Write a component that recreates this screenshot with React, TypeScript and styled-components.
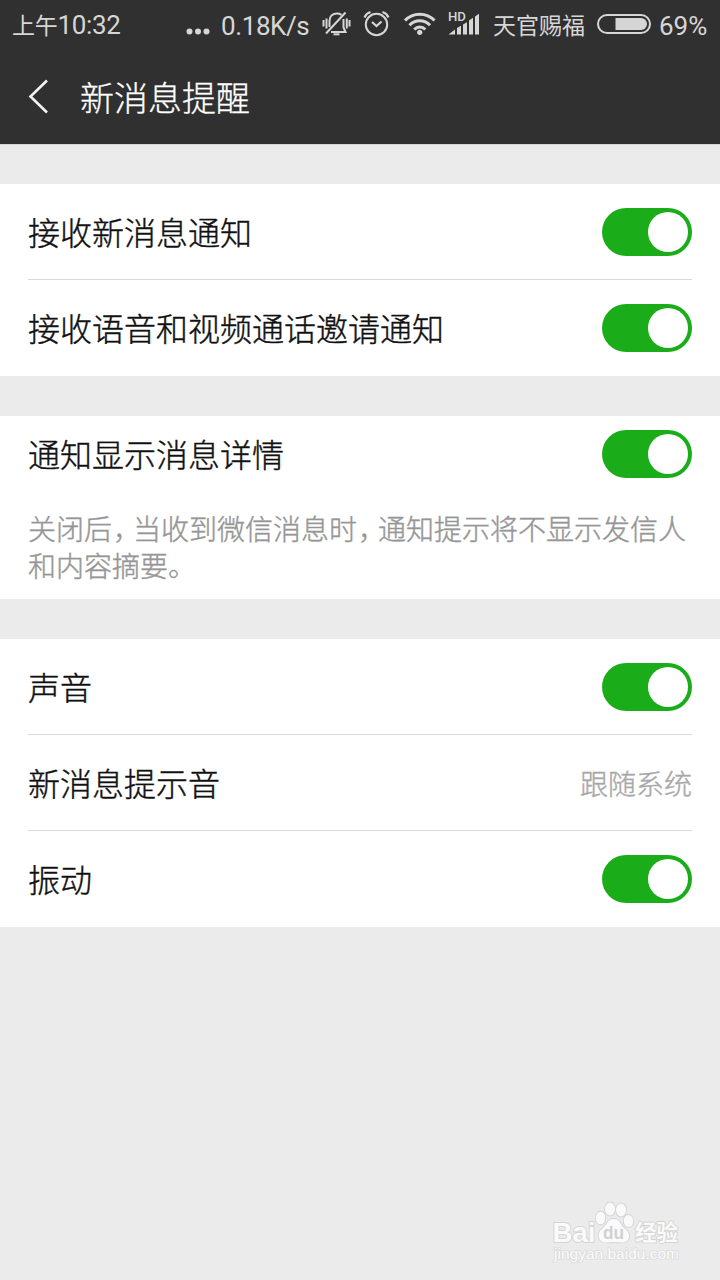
import React from 'react';
import styled, { createGlobalStyle } from 'styled-components';

const GlobalStyle = createGlobalStyle`
  * { box-sizing: border-box; }
  body { margin: 0; background: #ebebeb; }
`;

const Screen = styled.div`
  position: relative;
  width: 720px;
  height: 1280px;
  overflow: hidden;
  background: #ebebeb;
  font-family: 'Noto Sans CJK SC', sans-serif;
  font-weight: 300;
`;

const Header = styled.header`
  height: 144px;
  background: #303030;
  box-shadow: 0 1px 0 #d4d4d4;
`;

const StatusBar = styled.div`
  display: flex;
  align-items: center;
  height: 50px;
  padding: 0 12px;
  color: #d6d6d6;
  font-family: Roboto, 'Noto Sans CJK SC', sans-serif;
  font-size: 26px;
  font-weight: 400;
  line-height: 50px;
  white-space: nowrap;
  svg { display: block; flex: none; }
`;

const StatusText = styled.span<{ $width: number; $indent?: number; $spacing?: number }>`
  flex: none;
  width: ${p => p.$width}px;
  padding: 2px 0 0 ${p => p.$indent ?? 0}px;
  letter-spacing: ${p => p.$spacing ?? 0}px;
`;

const Hanzi = styled.span`
  font-size: 23px;
`;

const TitleBar = styled.div`
  display: flex;
  align-items: center;
  height: 94px;
  padding-left: 28px;
  gap: 31px;
`;

const Title = styled.h1`
  margin: 0;
  color: #fff;
  font-size: 34px;
  font-weight: 300;
  line-height: 94px;
  -webkit-text-stroke: 0.3px currentColor;
`;

const Group = styled.section`
  margin-top: 40px;
  padding: 0 28px;
  background: #fff;
`;

const Row = styled.div<{ $height?: number }>`
  display: flex;
  align-items: center;
  justify-content: space-between;
  height: ${p => p.$height ?? 96}px;
  & + & { box-shadow: 0 -1px 0 #d9d9d9; }
`;

const Label = styled.span`
  padding-bottom: 2px;
  color: #111;
  font-size: 32px;
  line-height: 48px;
  -webkit-text-stroke: 0.4px currentColor;
`;

const Value = styled.span`
  color: #a8a8a8;
  font-size: 28px;
  line-height: 40px;
  -webkit-text-stroke: 0.4px currentColor;
`;

const Description = styled.p`
  margin: 0;
  padding: 18px 0 14px;
  height: 107px;
  color: #969696;
  font-size: 28px;
  line-height: 37px;
  white-space: nowrap;
  -webkit-text-stroke: 0.4px currentColor;
`;

const Comma = styled.span`
  margin: 0 6px 0 1px;
  font-feature-settings: 'halt';
`;

const Track = styled.span`
  display: flex;
  justify-content: flex-end;
  width: 90px;
  height: 48px;
  padding: 4px;
  border-radius: 24px;
  background: #1aad19;
`;

const Knob = styled.span`
  width: 40px;
  height: 40px;
  border-radius: 50%;
  background: #fff;
`;

const Watermark = styled.svg`
  position: absolute;
  left: 540px;
  top: 1190px;
`;

const Toggle = () => (
  <Track role="switch" aria-checked="true"><Knob /></Track>
);

const StatusIcons = () => (
  <svg width="170" height="50" viewBox="0 0 170 50" fill="none" stroke="#d6d6d6" strokeWidth="2">
    {/* muted bell */}
    <path d="M3.500 20v6.500M6.500 18.500v10M29.500 20v6.500M26.800 18.500v10" />
    <path d="M25.500 12.500 6 33.500" strokeWidth="2" />
    <path d="M9.500 27v-6c0-4.500 3-7.500 7.500-7.500 1.700 0 3.200.5 4.500 1.300M23.500 19v8.500l2 4.500H11" />
    <path d="M13.500 34.300h6" />
    {/* alarm clock */}
    <circle cx="56.500" cy="24.500" r="10.700" />
    <path d="m52 22 4.500 4 5-4.500M44.500 17.500c1-2.500 3-4.500 6-5.500M68.500 17.500c-1-2.500-3-4.500-6-5.500" strokeWidth="2.200" />
    {/* wifi */}
    <path d="M85 20.500c8-8.500 21.500-8.500 29.500 0M89.500 25.300c5.500-6 15-6 20.500 0M94.300 29.500c3-3.400 8-3.400 11 0" strokeWidth="3" />
    <circle cx="99.700" cy="32.300" r="2.600" fill="#d6d6d6" stroke="none" />
    {/* signal */}
    <g fill="#d6d6d6" stroke="none">
      <path d="M128.500 34.500 135 29.500v5zM137 28l4-2.300v8.800h-4zM143 24.500l4-2.300v12.300h-4zM149 20.500l4-2.700v16.700h-4zM155 16.500l4-2.700v20.700h-4z" />
      <text x="128" y="21" fontFamily="Roboto, sans-serif" fontWeight="500" fontSize="12.500" textLength="18" lengthAdjust="spacingAndGlyphs">HD</text>
    </g>
  </svg>
);

const Dots = () => (
  <svg width="24" height="50" viewBox="0 0 24 50" fill="#d6d6d6">
    <circle cx="3.500" cy="31.500" r="3" />
    <circle cx="12" cy="31.500" r="3" />
    <circle cx="20.500" cy="31.500" r="3" />
  </svg>
);

const Battery = () => (
  <svg width="56" height="50" viewBox="0 0 56 50">
    <rect x="2" y="15" width="52" height="18" rx="9" fill="none" stroke="#d6d6d6" strokeWidth="2" />
    <path d="M19.500 18H45a6 6 0 0 1 0 12H19.500z" fill="#d6d6d6" />
  </svg>
);

export default function App() {
  return (
    <Screen>
      <GlobalStyle />
      <Header>
        <StatusBar>
          <StatusText $width={174} $spacing={-0.3}><Hanzi>上午</Hanzi>10:32</StatusText>
          <Dots />
          <StatusText $width={110} $indent={11} $spacing={-0.4}>0.18K/s</StatusText>
          <StatusIcons />
          <StatusText $width={106} $indent={3}><Hanzi>天官赐福</Hanzi></StatusText>
          <Battery />
          <StatusText $width={60} $indent={7}>69%</StatusText>
        </StatusBar>
        <TitleBar>
          <svg width="21" height="36" viewBox="0 0 21 36" fill="none" stroke="#f2f2f2" strokeWidth="2.600">
            <path d="M19 1.500 2.500 17.500 19 33.500" />
          </svg>
          <Title>新消息提醒</Title>
        </TitleBar>
      </Header>

      <Group>
        <Row><Label>接收新消息通知</Label><Toggle /></Row>
        <Row><Label>接收语音和视频通话邀请通知</Label><Toggle /></Row>
      </Group>

      <Group>
        <Row $height={76}><Label>通知显示消息详情</Label><Toggle /></Row>
        <Description>
          关闭后<Comma>，</Comma>当收到微信消息时<Comma>，</Comma>通知提示将不显示发信人<br />和内容摘要。
        </Description>
      </Group>

      <Group>
        <Row><Label>声音</Label><Toggle /></Row>
        <Row><Label>新消息提示音</Label><Value>跟随系统</Value></Row>
        <Row><Label>振动</Label><Toggle /></Row>
      </Group>

      <Watermark width="160" height="80" viewBox="0 0 160 80" fill="#fafafa" stroke="#d4d4d4" strokeWidth="1.800" paintOrder="stroke" strokeLinejoin="round">
        <text x="12.500" y="51.500" fontFamily="Liberation Sans, sans-serif" fontWeight="700" fontSize="28" textLength="43" lengthAdjust="spacingAndGlyphs">Bai</text>
        <ellipse cx="60.500" cy="28" rx="4.800" ry="6.300" />
        <ellipse cx="70" cy="19" rx="5" ry="6.500" />
        <ellipse cx="81" cy="20" rx="5" ry="6.500" />
        <ellipse cx="88.500" cy="31" rx="4.800" ry="6" />
        <path d="M74 29c-6 0-7 5-11 9-4 3-6 8-3 12 3 4 9 2 14 2s11 2 14-2c3-5 0-9-4-12-4-4-4-9-10-9z" />
        <text x="63" y="49" fontFamily="Liberation Sans, sans-serif" fontWeight="700" fontSize="19" fill="#d0d0d0" stroke="none" textLength="21" lengthAdjust="spacingAndGlyphs">du</text>
        <text x="95" y="50" fontFamily="Noto Sans CJK SC, sans-serif" fontWeight="700" fontSize="21.500" textLength="43">经验</text>
        <text x="14" y="69" fontFamily="Liberation Sans, sans-serif" fontWeight="400" fontSize="14" stroke="#dcdcdc" strokeWidth="1.600" textLength="125" lengthAdjust="spacingAndGlyphs">jingyan.baidu.com</text>
      </Watermark>
    </Screen>
  );
}
